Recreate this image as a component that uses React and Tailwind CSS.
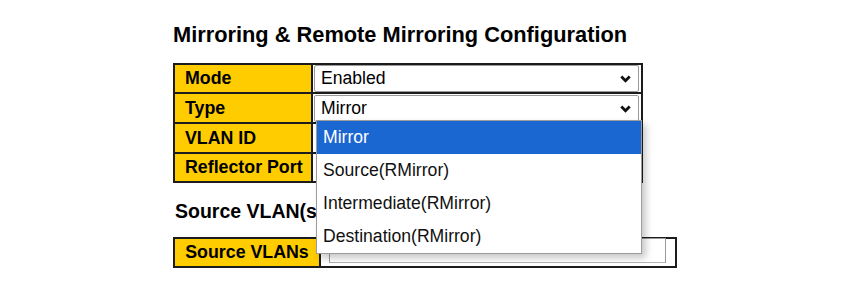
import React from "react";

const font = { fontFamily: '"Liberation Sans", Arial, sans-serif' };

function Chevron() {
  return (
    <svg width="11" height="8" viewBox="0 0 11 8" className="shrink-0">
      <polyline points="1.3,1.5 5.5,5.8 9.7,1.5" fill="none" stroke="#111" strokeWidth="2.8" strokeLinejoin="miter" />
    </svg>
  );
}

function Select({ value, h }) {
  return (
    <div className={`ml-px w-[325px] ${h} bg-white border border-[#9a9a9a] rounded-[2px] flex items-center justify-between pl-[6px] pr-[7px] text-[17.6px] text-black`}>
      <span>{value}</span>
      <Chevron />
    </div>
  );
}

function Row({ label, children, h, top }) {
  return (
    <div className={`flex ${h} ${top ? "border-t-2 border-[#1c1c1c]" : ""}`}>
      <div className="w-[138px] shrink-0 bg-[#ffcc00] border-r-2 border-[#1c1c1c] flex items-center pl-[10px] font-bold text-[17.8px] text-black">
        {label}
      </div>
      <div className="flex-1 flex items-center bg-white">{children}</div>
    </div>
  );
}

export default function App() {
  const items = ["Mirror", "Source(RMirror)", "Intermediate(RMirror)", "Destination(RMirror)"];
  return (
    <div className="w-[850px] h-[303px] bg-white relative overflow-hidden" style={font}>
      <div className="pl-[173px] pt-[23px]">
        <div className="h-[24px] leading-[24px] text-[21.8px] font-bold text-black">
          Mirroring &amp; Remote Mirroring Configuration
        </div>
        <div className="mt-[16px] w-[470px] border-2 border-[#1c1c1c]">
          <Row label="Mode" h="h-[27px]">
            <Select value="Enabled" h="h-[27px]" />
          </Row>
          <Row label="Type" h="h-[30px]" top>
            <div className="self-end">
              <Select value="Mirror" h="h-[27px]" />
            </div>
          </Row>
          <Row label="VLAN ID" h="h-[30px]" top />
          <Row label="Reflector Port" h="h-[29px]" top />
        </div>
        <div className="mt-[18px] pl-[2px] h-[21px] leading-[21px] text-[19.5px] font-bold text-black">
          Source VLAN(s) Configuration
        </div>
        <div className="mt-[15px] w-[504px] h-[31px] border-2 border-[#1c1c1c] flex">
          <div className="w-[146px] shrink-0 bg-[#ffcc00] border-r-2 border-[#1c1c1c] flex items-center justify-center font-bold text-[17.8px] text-black">
            Source VLANs
          </div>
          <div className="flex-1 flex items-end pl-[8px] bg-white">
            <div className="w-[337px] h-[25px] border border-[#9a9a9a] border-b-[#b5b5b5] bg-white mb-[3px]" />
          </div>
        </div>
      </div>

      {/* open dropdown list */}
      <div className="absolute left-[316px] top-[120px] w-[326px] bg-white border border-[#9c9c9c] shadow-[4px_4px_7px_rgba(0,0,0,0.22)] text-[17.6px]">
        {items.map((it, i) => (
          <div
            key={it}
            className={`h-[33px] flex items-center pl-[6px] ${i === 0 ? "bg-[#1a67d2] text-white" : "text-[#111]"}`}
          >
            {it}
          </div>
        ))}
      </div>
    </div>
  );
}
